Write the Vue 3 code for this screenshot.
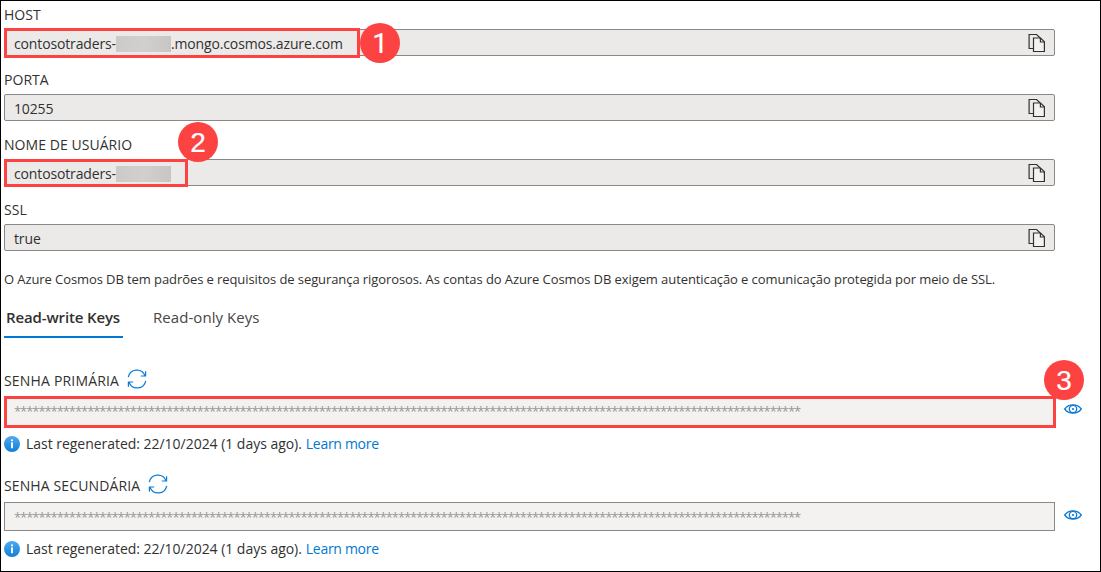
<script setup>
const fields = [
  { label: 'HOST', before: 'contosotraders-', after: '.mongo.cosmos.azure.com', masked: true, mark: 'host', step: 1 },
  { label: 'PORTA', before: '10255' },
  { label: 'NOME DE USUÁRIO', before: 'contosotraders-', after: '', masked: true, mark: 'user', step: 2 },
  { label: 'SSL', before: 'true' },
]
const keys = [
  { label: 'SENHA PRIMÁRIA', cls: 'primary', step: 3 },
  { label: 'SENHA SECUNDÁRIA', cls: 'secondary' },
]
const secret = '*'.repeat(129)
</script>

<template>
  <main class="page">
    <section v-for="f in fields" :key="f.label" class="field" :class="f.mark">
      <div class="label"><span class="t">{{ f.label }}</span></div>
      <div class="box">
        <span class="t value">{{ f.before }}</span>
        <span v-if="f.masked" class="mask"></span>
        <span v-if="f.after" class="t after">{{ f.after }}</span>
        <svg class="copy" width="18" height="20" viewBox="0 0 18 20" fill="none" stroke="#323130" stroke-width="1.2">
          <path d="M5 15.5H1.1V1.5H8.6L12.2 5" />
          <path d="M5.5 5H12.6L16.4 8.8V18.5H5.5Z" fill="#f3f2f1" />
          <path d="M12.4 5V9H16.4" />
        </svg>
        <i v-if="f.mark" class="outline"></i>
        <b v-if="f.step" class="badge">{{ f.step }}</b>
      </div>
    </section>

    <p class="note"><span class="t">O Azure Cosmos DB tem padrões e requisitos de segurança rigorosos. As contas do Azure Cosmos DB exigem autenticação e comunicação protegida por meio de SSL.</span></p>

    <nav class="tabs">
      <a class="tab active"><span class="t">Read-write Keys</span></a>
      <a class="tab"><span class="t">Read-only Keys</span></a>
    </nav>

    <section v-for="k in keys" :key="k.label" class="key" :class="k.cls">
      <div class="keylabel">
        <span class="t">{{ k.label }}</span>
        <svg width="20" height="20" viewBox="0 0 20 20" fill="none" stroke="#0f7bd4" stroke-width="1.2">
          <path d="M1.3 8.2A8.7 8.7 0 0 1 18 6.7M18.6 2.2V7H13.8" />
          <path d="M18.7 11.8A8.7 8.7 0 0 1 2 13.3M1.4 17.8V13H6.2" />
        </svg>
      </div>
      <div class="keyrow">
        <div class="secret"><span class="stars">{{ secret }}</span>
          <i v-if="k.step" class="outline"></i>
          <b v-if="k.step" class="badge">{{ k.step }}</b>
        </div>
        <svg class="eye" width="18" height="10" viewBox="0 0 18 10" fill="none" stroke="#0f7bd4" stroke-width="1.3">
          <path d="M.7 5C4.8-.5 13.200-.5 17.300 5C13.200 10.500 4.800 10.500 .7 5Z" />
          <circle cx="9" cy="5" r="3.700" />
          <circle cx="9" cy="5" r="1.1" fill="#0f7bd4" stroke="none" />
        </svg>
      </div>
      <div class="info">
        <svg width="16" height="16" viewBox="0 0 16 16">
          <defs>
            <linearGradient :id="'g-' + k.cls" x1="0" y1="1" x2="0" y2="0">
              <stop offset="0" stop-color="#0f7fd8" /><stop offset="1" stop-color="#50aaf0" />
            </linearGradient>
          </defs>
          <circle cx="8" cy="8" r="8" :fill="`url(#g-${k.cls})`" />
          <circle cx="8" cy="4.300" r="1.1" fill="#fff" />
          <rect x="7" y="6.300" width="2" height="6" rx=".5" fill="#fff" />
        </svg>
        <span class="t regen">Last regenerated: 22/10/2024 (1 days ago).</span>
        <a class="t more">Learn more</a>
      </div>
    </section>
  </main>
</template>

<style>
body { margin: 0; background: #fff; }
</style>

<style scoped>
.page {
  box-sizing: border-box;
  width: 1101px;
  height: 572px;
  padding: 3px 0 0 3px;
  border: 1px solid #000;
  background: #fff;
  color: #323130;
  font: 14px/20px "Open Sans", "Noto Sans", sans-serif;
  overflow: hidden;
}
.t { white-space: nowrap; }
.field { height: 65px; }
.label { height: 25px; line-height: 22px; letter-spacing: 0.05px; }
.box {
  position: relative;
  display: flex;
  align-items: center;
  box-sizing: border-box;
  width: 1051px;
  height: 27px;
  padding-left: 9px;
  border: 1px solid #8a8886;
  border-radius: 2px;
  background: #ebeae9;
}
.value, .after { line-height: 25px; padding-top: 2px; letter-spacing: -0.14px; }
.mask { width: 55px; height: 16px; margin-top: 3px; background: linear-gradient(90deg, #cccac9, #d2d0cf 50%, #c8c6c5); }
.copy { margin-left: auto; margin-right: 8px; }
.outline { position: absolute; box-sizing: border-box; border: 3px solid #fd4242; }
.host .outline { left: -1px; top: -2px; width: 356px; height: 30px; }
.user .outline { left: -1px; top: -1px; width: 184px; height: 28px; }
.badge {
  position: absolute;
  width: 40px;
  height: 40px;
  border-radius: 50%;
  background: #fd4242;
  color: #fff;
  font: 28px/41px "Liberation Sans", sans-serif;
  -webkit-text-stroke: 0.2px #fff;
  text-align: center;
}
.host .badge { left: 355px; top: -7px; font-family: Roboto, sans-serif; }
.user .badge { left: 173px; top: -38px; }
.note { margin: 4px 0 0; height: 32px; line-height: 22px; font-size: 13px; letter-spacing: -0.085px; }
.tabs { display: flex; gap: 28px; height: 38px; }
.tab { box-sizing: border-box; height: 38px; padding: 0 2px; line-height: 34px; font-size: 15px; letter-spacing: 0.06px; color: #484644; }
.tab.active { width: 119px; border-bottom: 2px solid #0078d4; font-weight: 600; letter-spacing: -0.13px; color: #323130; }
.key { height: 105px; }
.primary { margin-top: 31px; }
.keylabel { display: flex; align-items: center; gap: 8px; box-sizing: border-box; height: 28px; padding-bottom: 9px; letter-spacing: 0.12px; }
.primary .keylabel { letter-spacing: 0.18px; }
.keylabel .t { padding-top: 4px; }
.keyrow { display: flex; align-items: center; gap: 9px; height: 29px; }
.secret { position: relative; box-sizing: border-box; width: 1051px; height: 29px; border: 1px solid #8a8886; background: #f3f2f1; padding-left: 9px; }
.stars { display: block; color: #989694; line-height: 28px; font-size: 13px; letter-spacing: -1.066px; }
.primary .stars { line-height: 26px; }
.secret .outline { left: -1px; top: -2px; width: 1052px; height: 32px; }
.secret .badge { left: 1039px; top: -38px; }
.eye { margin-bottom: 3px; }
.primary .eye { margin-bottom: 5px; }
.info { display: flex; align-items: center; height: 36px; }
.regen { margin-left: 6px; letter-spacing: -0.03px; }
.more { margin-left: 4px; letter-spacing: -0.3px; color: #0078d4; }
</style>
